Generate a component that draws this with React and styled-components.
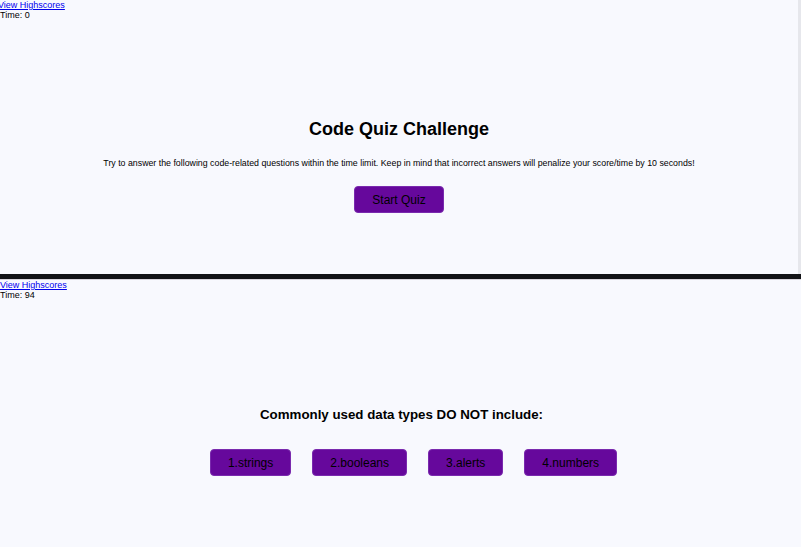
import styled, { createGlobalStyle } from "styled-components";

const GlobalStyle = createGlobalStyle`
  html, body {
    margin: 0;
    padding: 0;
    background: #f8f9fe;
    font-family: "Liberation Sans", Arial, sans-serif;
  }
`;

const Screen = styled.section`
  height: ${(p) => p.$height}px;
  display: flex;
  flex-direction: column;
  background: #f8f9fe;
  box-sizing: border-box;
  border-right: ${(p) => (p.$edge ? "3px solid #e6e7ec" : "none")};
`;

const Header = styled.header`
  font-size: 9px;
  line-height: 10px;
  color: #000;
`;

const Link = styled.a`
  display: block;
  color: #0000ee;
  text-decoration: underline;
  margin-left: ${(p) => p.$shift || 0}px;
`;

const Main = styled.main`
  display: flex;
  flex-direction: column;
  align-items: center;
  margin-top: ${(p) => p.$top}px;
`;

const Title = styled.h1`
  margin: 0;
  font-size: 18px;
  line-height: 21px;
  font-weight: bold;
`;

const Question = styled.h2`
  margin: 0;
  font-size: 13.3px;
  line-height: 17px;
  font-weight: bold;
  padding-left: 2px;
`;

const Intro = styled.p`
  margin: 18px 0 17px;
  font-size: 8.8px;
  line-height: 11px;
`;

const Choices = styled.div`
  display: flex;
  gap: 21px;
  margin-top: 26px;
  padding-left: 26px;
`;

const QuizButton = styled.button`
  height: 27px;
  padding: 0 17px;
  background: #66089c;
  border: 1px solid #7a2aae;
  border-radius: 4px;
  color: #000;
  font-family: "Liberation Sans", Arial, sans-serif;
  font-size: 12px;
`;

const Divider = styled.div`
  height: 5px;
  background: #121317;
  border-bottom: 1px solid #d8d4dc;
`;

const answers = ["1.strings", "2.booleans", "3.alerts", "4.numbers"];

export default function App() {
  return (
    <>
      <GlobalStyle />
      <Screen $height={274} $edge>
        <Header>
          <Link href="#" $shift={-2}>View Highscores</Link>
          <div>Time: 0</div>
        </Header>
        <Main $top={99}>
          <Title>Code Quiz Challenge</Title>
          <Intro>
            Try to answer the following code-related questions within the time limit. Keep in mind that incorrect answers will penalize your score/time by 10 seconds!
          </Intro>
          <QuizButton>Start Quiz</QuizButton>
        </Main>
      </Screen>
      <Divider />
      <Screen $height={268}>
        <Header>
          <Link href="#">View Highscores</Link>
          <div>Time: 94</div>
        </Header>
        <Main $top={106}>
          <Question>Commonly used data types DO NOT include:</Question>
          <Choices>
            {answers.map((a) => (
              <QuizButton key={a}>{a}</QuizButton>
            ))}
          </Choices>
        </Main>
      </Screen>
    </>
  );
}
